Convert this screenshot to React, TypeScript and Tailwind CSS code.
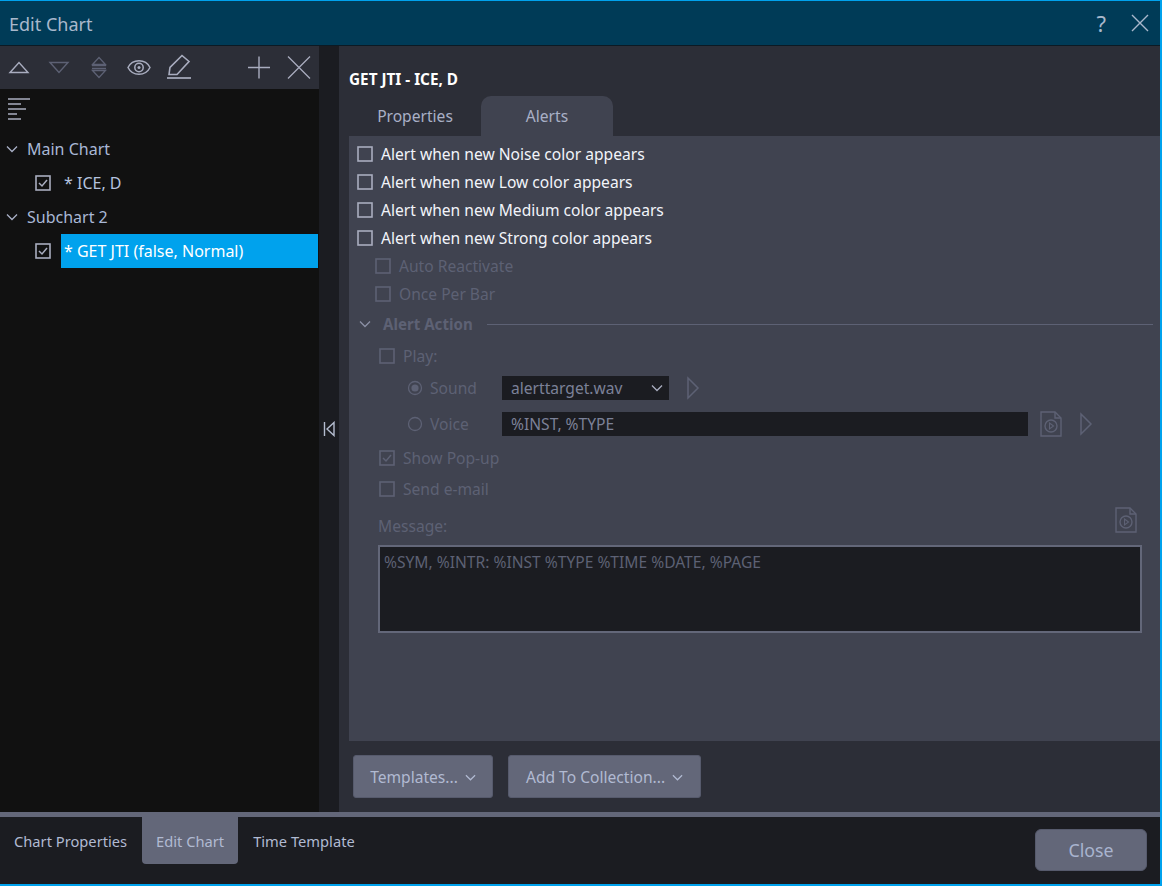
import React from "react";

const Chevron = ({ c = "#a9b0c6", w = 12, cls = "" }: { c?: string; w?: number; cls?: string }) => (
  <svg width={w} height={w} viewBox="0 0 12 12" fill="none" stroke={c} strokeWidth="1.3" className={cls}>
    <path d="M1 3.5 L6 8.5 L11 3.5" />
  </svg>
);

const Check = ({ checked = false, c, size = 16 }: { checked?: boolean; c: string; size?: number }) => (
  <svg width={size} height={size} viewBox="0 0 16 16" fill="none" className="shrink-0">
    <rect x="1" y="1" width="14" height="14" stroke={c} strokeWidth="1.6" />
    {checked && <path d="M4 8 L7 11 L12 5" stroke={c} strokeWidth="1.5" />}
  </svg>
);

const Radio = ({ on = false }: { on?: boolean }) => (
  <svg width="16" height="16" viewBox="0 0 16 16" fill="none" className="shrink-0">
    <circle cx="8" cy="8" r="6.5" stroke="#5d6174" strokeWidth="1.3" />
    {on && <circle cx="8" cy="8" r="3.6" fill="#5d6174" />}
  </svg>
);

const Play = () => (
  <svg width="14" height="24" viewBox="0 0 14 24" fill="none" stroke="#5d6174" strokeWidth="1.5" className="shrink-0">
    <path d="M2 2 L12 12 L2 22 Z" />
  </svg>
);

const FilePlay = () => (
  <svg width="24" height="26" viewBox="0 0 24 26" fill="none" stroke="#5d6174" strokeWidth="1.4" className="shrink-0">
    <path d="M2 1 H16 L22 7 V25 H2 Z" />
    <path d="M16 1 V7 H22" />
    <circle cx="12" cy="15" r="6" />
    <path d="M10.5 12 L14.5 15 L10.5 18 Z" strokeWidth="1.1" />
  </svg>
);

const Tool = ({ children }: { children: React.ReactNode }) => (
  <svg width="30" height="30" viewBox="0 0 30 30" fill="none">{children}</svg>
);

const AlertRow = ({ label }: { label: string }) => (
  <div className="flex h-7 items-center gap-2 pl-[8px] text-[#f2f4fa]">
    <Check c="#a9adbf" />
    <span className="pt-[2px]">{label}</span>
  </div>
);

const DimRow = ({ label, checked = false, pl, h }: { label: string; checked?: boolean; pl: string; h: string }) => (
  <div className={`flex items-center gap-2 ${pl} ${h} text-[#5d6174]`}>
    <Check c="#5d6174" checked={checked} />
    <span className="pt-[2px]">{label}</span>
  </div>
);

export default function App() {
  return (
    <div className="flex h-[886px] w-[1162px] flex-col overflow-hidden border-t border-r-2 border-b-2 border-[#00a2ed] text-[15.6px] text-[#a9b0c6] [font-family:'Noto_Sans',sans-serif]">
      <header className="flex h-[45px] shrink-0 items-center justify-between border-b border-[#0c1a24] bg-[#003b57] pl-[9px] pr-[11px]">
        <span className="pt-[2px] text-[18px] text-[#a9b8cc]">Edit Chart</span>
        <div className="flex items-center gap-[25px]">
          <span className="text-[22px] leading-none text-[#a9b8cc]">?</span>
          <svg width="18" height="18" viewBox="0 0 18 18" stroke="#a9b8cc" strokeWidth="1.4"><path d="M1 1 L17 17 M17 1 L1 17" /></svg>
        </div>
      </header>

      <div className="flex min-h-0 flex-1">
        <aside className="flex w-[319px] shrink-0 flex-col bg-[#111111] text-[16px]">
          <div className="flex h-[43px] shrink-0 items-center justify-between bg-[#2c2e37] pl-[4px] pr-[5px]">
            <div className="flex items-center gap-[10px]">
              <Tool><path d="M6 19.5 L15 9.5 L24 19.5 Z" stroke="#a9adbf" strokeWidth="1.4" /></Tool>
              <Tool><path d="M6 9.5 L15 19.5 L24 9.5 Z" stroke="#5d6174" strokeWidth="1.4" /></Tool>
              <Tool>
                <path d="M8.5 11.5 L15 4.5 L21.5 11.5 Z M8.5 17.5 L15 24.5 L21.5 17.5 Z" stroke="#5d6174" strokeWidth="1.3" />
                <path d="M8 12.5 H22 M8 15.5 H22" stroke="#5d6174" strokeWidth="1.5" />
              </Tool>
              <Tool>
                <path d="M4 14.5 C8.5 5.5 21.5 5.5 26 14.5 C21.5 23.5 8.5 23.5 4 14.5 Z" stroke="#a9adbf" strokeWidth="1.5" />
                <circle cx="15" cy="14.5" r="4.2" stroke="#a9adbf" strokeWidth="1.5" />
                <circle cx="15" cy="14.5" r="1.5" fill="#a9adbf" />
              </Tool>
              <Tool>
                <path d="M5 21.5 L6 14.5 L18 2.5 L25 8.5 L13 21.5 Z" stroke="#a9adbf" strokeWidth="1.6" />
                <path d="M3 25 H27" stroke="#a9adbf" strokeWidth="1.7" />
              </Tool>
            </div>
            <div className="flex items-center gap-[10px]">
              <Tool><path d="M15 3.5 V25.5 M4 14.5 H26" stroke="#a9adbf" strokeWidth="1.4" /></Tool>
              <Tool><path d="M4 3.5 L26 25.5 M26 3.5 L4 25.5" stroke="#a9adbf" strokeWidth="1.3" /></Tool>
            </div>
          </div>
          <div className="pl-[8px] pt-[9px]">
            <svg width="22" height="24" viewBox="0 0 22 24" stroke="#a9adbf" strokeWidth="1.4" className="block">
              <path d="M0 1 H22 M0 6 H13 M0 11 H18 M0 16 H9 M0 21 H13" />
            </svg>
          </div>
          <div className="mt-[10px] flex h-[34px] items-center pl-[6px] text-[#a9b8d6]">
            <Chevron />
            <span className="ml-[9px]">Main Chart</span>
          </div>
          <div className="flex h-[34px] items-center pl-[35px] text-[#a9b8d6]">
            <Check checked c="#a9adbf" />
            <span className="ml-[13px] text-[#b4c2de]">* ICE, D</span>
          </div>
          <div className="flex h-[34px] items-center pl-[6px] text-[#a9b8d6]">
            <Chevron />
            <span className="ml-[9px]">Subchart 2</span>
          </div>
          <div className="flex h-[34px] items-center pl-[35px] pr-px">
            <Check checked c="#a9adbf" />
            <span className="ml-[10px] flex h-[34px] flex-1 items-center bg-[#00a2ed] pl-[3px] text-white">* GET JTI (false, Normal)</span>
          </div>
        </aside>

        <div className="flex w-[20px] shrink-0 items-center justify-center bg-[#1b1c21]">
          <svg width="12" height="16" viewBox="0 0 12 16" fill="none" stroke="#b4bccf" strokeWidth="1.4">
            <path d="M1.5 1 V15 M11 1.5 L4 8 L11 14.5 Z" />
          </svg>
        </div>

        <main className="flex min-w-0 flex-1 flex-col bg-[#2c2e37] pl-[10px]">
          <div className="flex h-[50px] shrink-0 items-start pt-[21px] text-[15.3px] leading-[24px] font-bold text-white">GET JTI - ICE, D</div>
          <div className="flex h-[40px] shrink-0 items-stretch">
            <div className="flex w-[132px] items-center justify-center pt-[2px] text-[#a9b0c6]">Properties</div>
            <div className="flex w-[132px] items-center justify-center rounded-t-[10px] bg-[#404350] pt-[2px] text-[#a9b0c6]">Alerts</div>
          </div>

          <section className="flex h-[605px] shrink-0 flex-col bg-[#404350] pt-[4px]">
            <AlertRow label="Alert when new Noise color appears" />
            <AlertRow label="Alert when new Low color appears" />
            <AlertRow label="Alert when new Medium color appears" />
            <AlertRow label="Alert when new Strong color appears" />
            <DimRow label="Auto Reactivate" pl="pl-[26px]" h="h-7" />
            <DimRow label="Once Per Bar" pl="pl-[26px]" h="h-7" />
            <div className="flex h-8 items-center pl-[10px] pr-[7px] text-[#5d6174]">
              <Chevron c="#8b90a5" />
              <span className="ml-[12px] text-[15.1px] font-bold">Alert Action</span>
              <div className="ml-[14px] h-px flex-1 bg-[#5d6174]" />
            </div>
            <DimRow label="Play:" pl="pl-[30px]" h="h-8" />
            <div className="flex h-8 items-center pl-[58px] text-[#5d6174]">
              <Radio on />
              <span className="ml-[7px] w-[72px] pt-[2px]">Sound</span>
              <div className="flex h-6 w-[167px] items-center justify-between bg-[#1b1c21] pl-[9px] pr-[6px] text-[#7b8198]">
                <span className="pt-[2px]">alerttarget.wav</span>
                <Chevron c="#a9adbf" />
              </div>
              <div className="ml-[17px]"><Play /></div>
            </div>
            <div className="flex h-10 items-center pl-[58px] text-[#5d6174]">
              <Radio />
              <span className="ml-[7px] w-[72px] pt-[2px]">Voice</span>
              <div className="flex h-6 w-[526px] items-center bg-[#1b1c21] pl-[9px] pt-[2px] text-[#7b8198]">%INST, %TYPE</div>
              <div className="ml-[11px]"><FilePlay /></div>
              <div className="ml-[16px]"><Play /></div>
            </div>
            <DimRow label="Show Pop-up" checked pl="pl-[30px]" h="h-7" />
            <DimRow label="Send e-mail" pl="pl-[30px]" h="h-[34px]" />
            <div className="flex h-[39px] items-center justify-between pl-[29px] pr-[22px] text-[#5d6174]">
              <span className="pt-[2px]">Message:</span>
              <div className="-mt-[12px]"><FilePlay /></div>
            </div>
            <div className="ml-[29px] h-[88px] w-[764px] border-2 border-[#636779] bg-[#1b1c21] px-[4px] pt-[4px] text-[#5d6174]">
              %SYM, %INTR: %INST %TYPE %TIME %DATE, %PAGE
            </div>
          </section>

          <div className="flex flex-1 items-center gap-[15px] pb-[1px] pl-[4px]">
            <button className="flex h-[43px] w-[140px] items-center justify-center gap-[7px] rounded-[3px] border border-[#565a6c] bg-[#636779] pt-[3px] text-[#b1bad2]">
              Templates...
              <Chevron w={11} c="#b1bad2" />
            </button>
            <button className="flex h-[43px] w-[193px] items-center justify-center gap-[7px] rounded-[3px] border border-[#565a6c] bg-[#636779] pt-[3px] text-[#b1bad2]">
              Add To Collection...
              <Chevron w={11} c="#b1bad2" />
            </button>
          </div>
        </main>
      </div>

      <footer className="flex h-[72px] shrink-0 border-t-[5px] border-[#636779] bg-[#1b1c21] text-[14.7px] text-[#b1bad2]">
        <div className="flex h-[47px] items-center pl-[14px] pr-[15px] pt-px">Chart Properties</div>
        <div className="flex h-[47px] w-[96px] items-center justify-center rounded-b-[4px] bg-[#636779] pt-px">Edit Chart</div>
        <div className="flex h-[47px] items-center pl-[15px] pt-px">Time Template</div>
        <div className="ml-auto flex items-start pr-[13px] pt-[12px]">
          <button className="h-[42px] w-[112px] rounded-[6px] border border-[#565a6c] bg-[#636779] pt-px text-[17.8px] text-[#a9b4cf]">Close</button>
        </div>
      </footer>
    </div>
  );
}
